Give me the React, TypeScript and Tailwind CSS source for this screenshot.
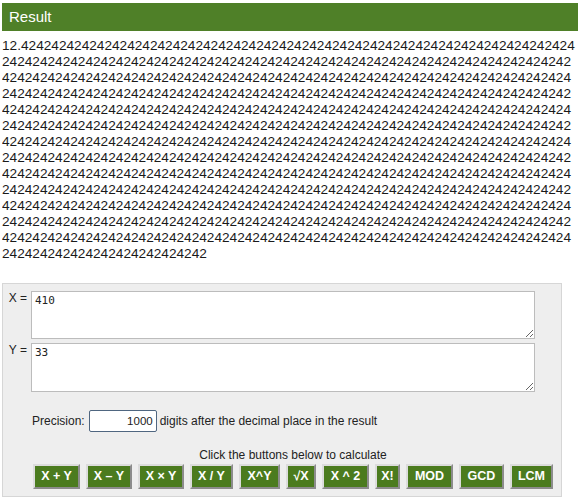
import * as React from 'react'

const digits = '12.' + '42'.repeat(500)

// split into the same rows the reference wraps at
const resultLines = (() => {
    const lines: string[] = [digits.slice(0, 76)]
    for (let i = 76; i < digits.length; i += 75) lines.push(digits.slice(i, i + 75))
    return lines
})()

const buttons = [
    { label: 'X + Y', w: 'w-[47px]' },
    { label: 'X – Y', w: 'w-[46px]' },
    { label: 'X × Y', w: 'w-[46px]' },
    { label: 'X / Y', w: 'w-[43px]' },
    { label: 'X^Y', w: 'w-[41px]' },
    { label: '√X', w: 'w-[30px]' },
    { label: 'X ^ 2', w: 'w-[47px]' },
    { label: 'X!', w: 'w-[25px]' },
    { label: 'MOD', w: 'w-[47px]' },
    { label: 'GCD', w: 'w-[45px]' },
    { label: 'LCM', w: 'w-[43px]' },
]

const Field = ({ name, value, h }: { name: string; value: string; h: string }) => (
    <div className="flex items-start">
        <label className="w-[25px] text-right text-[12px] leading-[14px] text-[#222] pr-[1px]">
            {name} =
        </label>
        <textarea
            defaultValue={value}
            className={`ml-[3px] w-[504px] ${h} bg-white border border-[#bcbcbc] px-[3px] py-[2px] text-[11px] leading-[14px] text-[#222] outline-none font-['DejaVu_Sans_Mono',monospace]`}
        />
    </div>
)

export default function App() {
    return (
        <div className="px-[2px] pt-[3px] font-['Liberation_Sans',Arial,sans-serif] text-[#1a1a1a]">
            <div className="h-[28px] bg-[#4f8028] flex items-center px-[7px] text-white text-[15px]">
                Result
            </div>
            <div className="mt-[7px] text-[13.65px] leading-[16px]">
                {resultLines.map((line, i) => (
                    <div key={i} className="whitespace-nowrap overflow-hidden">
                        {line}
                    </div>
                ))}
            </div>

            <div className="mt-[21px] w-[560px] bg-[#eeeeee] border border-[#d6d6d6] pt-[7px] pb-[7px]">
                <div className="flex flex-col gap-[4px]">
                    <Field name="X" value="410" h="h-[48px]" />
                    <Field name="Y" value="33" h="h-[49px]" />
                </div>

                <div className="mt-[18px] ml-[29px] flex items-center text-[12px] text-[#222]">
                    <span>Precision:</span>
                    <input
                        defaultValue="1000"
                        className="ml-[4px] w-[68px] h-[22px] bg-white border border-[#4f6680] rounded-[2px] px-[3px] text-right text-[11.5px] outline-none"
                    />
                    <span className="ml-[3px]">digits after the decimal place in the result</span>
                </div>

                <div className="mt-[16px] ml-[30px] w-[520px] flex flex-col items-center">
                    <div className="text-[12px] leading-[14px] text-[#222]">
                        Click the buttons below to calculate
                    </div>
                    <div className="mt-[2px] flex gap-[6px]">
                        {buttons.map((b) => (
                            <button
                                key={b.label}
                                className={`${b.w} h-[25px] bg-[#4b7b1e] text-white font-bold text-[12.5px] whitespace-nowrap border-2 border-t-[#dcdcdc] border-l-[#dcdcdc] border-b-[#8c8c8c] border-r-[#8c8c8c]`}
                            >
                                {b.label}
                            </button>
                        ))}
                    </div>
                </div>
            </div>
        </div>
    )
}
